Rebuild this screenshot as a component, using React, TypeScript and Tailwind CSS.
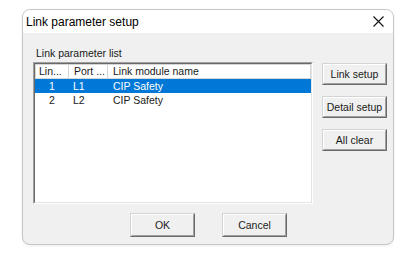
const font = { fontFamily: '"Liberation Sans", Arial, sans-serif' };

function SideButton({ label }: { label: string }) {
  return (
    <button className="w-[65px] h-[22px] border border-t-[#d4d4d4] border-l-[#d4d4d4] border-b-[#6b6b6b] border-r-[#6b6b6b] bg-[#f0f0f0] p-0">
      <div className="w-full h-full border border-t-white border-l-white border-b-[#a0a0a0] border-r-[#a0a0a0] flex items-center justify-center text-[10.5px] text-[#1a1a1a] leading-none">
        {label}
      </div>
    </button>
  );
}

function DlgButton({ label }: { label: string }) {
  return (
    <button className="w-[65px] h-[24px] border border-t-[#d4d4d4] border-l-[#d4d4d4] border-b-[#6b6b6b] border-r-[#6b6b6b] bg-[#f0f0f0] p-0">
      <div className="w-full h-full border border-t-white border-l-white border-b-[#a0a0a0] border-r-[#a0a0a0] flex items-center justify-center text-[10.5px] text-[#1a1a1a] leading-none">
        {label}
      </div>
    </button>
  );
}

const rows = [
  { no: '1', port: 'L1', name: 'CIP Safety', selected: true },
  { no: '2', port: 'L2', name: 'CIP Safety', selected: false },
];

export default function App() {
  return (
    <div className="w-[412px] h-[262px] bg-white overflow-hidden" style={font}>
      <div className="ml-[22px] mt-[9px] w-[372px] h-[236px] border border-[#c6c6c6] rounded-[8px] overflow-hidden bg-[#f0f0f0] flex flex-col shadow-[0_1px_3px_rgba(0,0,0,0.08)]">
        {/* Title bar */}
        <div className="h-[23px] bg-white flex items-center justify-between pl-[3px] pr-[9px]">
          <span className="text-[12px] text-black leading-none">Link parameter setup</span>
          <svg width="11" height="11" viewBox="0 0 11 11">
            <path d="M0.5 0.5 L10.5 10.5 M10.5 0.5 L0.5 10.5" stroke="#111" strokeWidth="1.1" fill="none" />
          </svg>
        </div>

        {/* Body */}
        <div className="flex-1 flex flex-col pt-[14px] pl-[10px] pr-[5px]">
          <div className="h-[12px] pl-[3px] text-[10.5px] leading-[12px] text-[#1a1a1a]">Link parameter list</div>
          <div className="mt-[3px] flex gap-[9px]">
            {/* List view */}
            <div className="w-[280px] h-[142px] shrink-0 border border-t-[#a0a0a0] border-l-[#a0a0a0] border-b-white border-r-white">
              <div className="w-full h-full border border-t-[#696969] border-l-[#696969] border-b-[#e3e3e3] border-r-[#e3e3e3] bg-white">
                <div className="flex h-[15px] border border-[#d6d6d6] text-[10.5px] text-[#1a1a1a] leading-none">
                  <div className="w-[33px] flex items-center pl-[3px] border-r border-[#d6d6d6]">Lin...</div>
                  <div className="w-[39px] flex items-center pl-[5px] border-r border-[#d6d6d6]">Port ...</div>
                  <div className="flex-1 flex items-center pl-[5px]">Link module name</div>
                </div>
                {rows.map((r) => (
                  <div
                    key={r.no}
                    className={`flex h-[14px] pt-[1px] text-[10.5px] leading-none ${r.selected ? 'bg-[#0078d7] text-white' : 'text-[#1a1a1a]'}`}
                  >
                    <div className="w-[34px] flex items-center justify-center">{r.no}</div>
                    <div className="w-[39px] flex items-center pl-[4px]">{r.port}</div>
                    <div className="flex-1 flex items-center pl-[5px]">{r.name}</div>
                  </div>
                ))}
              </div>
            </div>

            {/* Side buttons */}
            <div className="flex flex-col gap-[11px] pt-[1px]">
              <SideButton label="Link setup" />
              <SideButton label="Detail setup" />
              <SideButton label="All clear" />
            </div>
          </div>

          <div className="mt-[9px] flex justify-center gap-[27px] pr-[4px]">
            <DlgButton label="OK" />
            <DlgButton label="Cancel" />
          </div>
        </div>
      </div>
    </div>
  );
}
